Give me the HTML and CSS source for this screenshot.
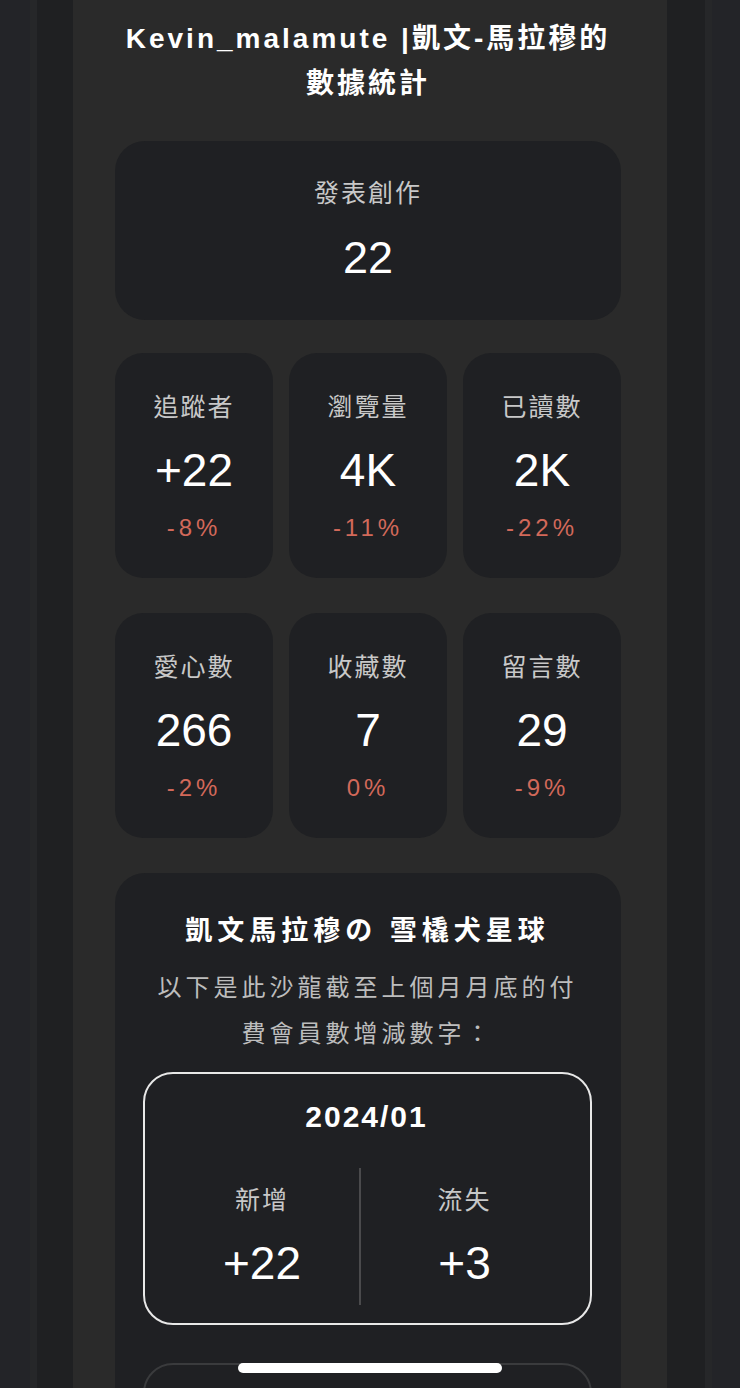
FILE: index.html
```html
<!DOCTYPE html>
<html lang="zh-Hant">
<head>
<meta charset="utf-8">
<title>Kevin_malamute 數據統計</title>
<link rel="stylesheet" href="styles.css">
</head>
<body>
<div class="frame">
  <div class="edge edge-left"></div>
  <div class="seam"></div>
  <div class="gutter gutter-left"></div>
  <main class="panel">
    <h1 class="title">Kevin_malamute |凱文-馬拉穆的<br>數據統計</h1>

    <section class="card card-wide">
      <div class="label">發表創作</div>
      <div class="value">22</div>
    </section>

    <div class="grid">
      <section class="card card-stat">
        <div class="label">追蹤者</div>
        <div class="value">+22</div>
        <div class="pct">-8%</div>
      </section>
      <section class="card card-stat">
        <div class="label">瀏覽量</div>
        <div class="value">4K</div>
        <div class="pct">-11%</div>
      </section>
      <section class="card card-stat">
        <div class="label">已讀數</div>
        <div class="value">2K</div>
        <div class="pct">-22%</div>
      </section>
      <section class="card card-stat">
        <div class="label">愛心數</div>
        <div class="value">266</div>
        <div class="pct">-2%</div>
      </section>
      <section class="card card-stat">
        <div class="label">收藏數</div>
        <div class="value">7</div>
        <div class="pct">0%</div>
      </section>
      <section class="card card-stat">
        <div class="label">留言數</div>
        <div class="value">29</div>
        <div class="pct">-9%</div>
      </section>
    </div>

    <section class="card salon">
      <h2 class="salon-title">凱文馬拉穆の 雪橇犬星球</h2>
      <p class="salon-desc">以下是此沙龍截至上個月月底的付費會員數增減數字：</p>
      <div class="month">
        <div class="month-date">2024/01</div>
        <div class="month-cols">
          <div class="month-col">
            <div class="label">新增</div>
            <div class="value">+22</div>
          </div>
          <div class="month-divider"></div>
          <div class="month-col">
            <div class="label">流失</div>
            <div class="value">+3</div>
          </div>
        </div>
      </div>
      <div class="month month-next"></div>
    </section>
  </main>
  <div class="gutter gutter-right"></div>
  <div class="seam"></div>
  <div class="edge edge-right"></div>
</div>
<div class="home-indicator"></div>
</body>
</html>
```

FILE: styles.css
```css
* {
  box-sizing: border-box;
}

html, body {
  margin: 0;
  padding: 0;
  background: #1f2023;
}

body {
  font-family: "Liberation Sans", "Noto Sans CJK TC", sans-serif;
  color: #ffffff;
}

.frame {
  display: flex;
  width: 740px;
  height: 1388px;
  overflow: hidden;
}

.edge {
  background: #232428;
}

.edge-left {
  width: 30px;
}

.edge-right {
  width: 28px;
}

.seam {
  width: 7px;
  background: #262729;
}

.gutter {
  background: #1f2022;
}

.gutter-left {
  width: 36px;
}

.gutter-right {
  width: 38px;
}

.panel {
  width: 594px;
  flex: none;
  background: #2a2a2a;
  padding: 16px 46px 0 42px;
}

.title {
  margin: 0;
  font-size: 28px;
  line-height: 45px;
  font-weight: 700;
  letter-spacing: 3px;
  text-align: center;
  color: #ffffff;
}

.card {
  background: #1f2023;
  border-radius: 30px;
  text-align: center;
}

.label {
  font-size: 25px;
  line-height: 30px;
  letter-spacing: 2px;
  color: #c8c8c8;
}

.value {
  font-size: 46px;
  line-height: 50px;
  color: #ffffff;
}

.pct {
  font-size: 24px;
  line-height: 30px;
  letter-spacing: 4px;
  color: #d2695a;
}

.card-wide {
  margin-top: 35px;
  padding: 37px 0;
}

.card-wide .value {
  margin-top: 25px;
  font-size: 45px;
}

.grid {
  margin-top: 33px;
  display: grid;
  grid-template-columns: repeat(3, 158px);
  column-gap: 16px;
  row-gap: 35px;
}

.card-stat {
  height: 225px;
  padding: 39px 0 35px;
  border-radius: 28px;
}

.card-stat .value {
  margin-top: 23px;
}

.card-stat .pct {
  margin-top: 18px;
}

.salon {
  margin-top: 35px;
  padding: 40px 29px 0 28px;
  height: 620px;
}

.salon-title {
  margin: 0;
  font-size: 27px;
  line-height: 36px;
  font-weight: 700;
  letter-spacing: 5px;
  color: #ffffff;
}

.salon-desc {
  margin: 16px auto 0;
  max-width: 440px;
  font-size: 24px;
  line-height: 46px;
  letter-spacing: 4px;
  color: #bdbdbd;
}

.month {
  margin-top: 15px;
  border: 2px solid #e8e8e8;
  border-radius: 30px;
  padding: 25px 22px 18px 20px;
}

.month-date {
  font-size: 30px;
  line-height: 36px;
  font-weight: 700;
  letter-spacing: 2px;
  color: #ffffff;
}

.month-cols {
  margin-top: 33px;
  display: grid;
  grid-template-columns: 194px 2px 1fr;
  height: 137px;
}

.month-col {
  padding-top: 17px;
}

.month-col .value {
  margin-top: 23px;
}

.month-divider {
  background: #4a4a4c;
}

.month-next {
  margin-top: 38px;
  height: 200px;
  border-color: #3a3b3d;
}

.home-indicator {
  position: fixed;
  left: 238px;
  bottom: 15px;
  width: 264px;
  height: 10px;
  border-radius: 5px;
  background: #ffffff;
}
```
